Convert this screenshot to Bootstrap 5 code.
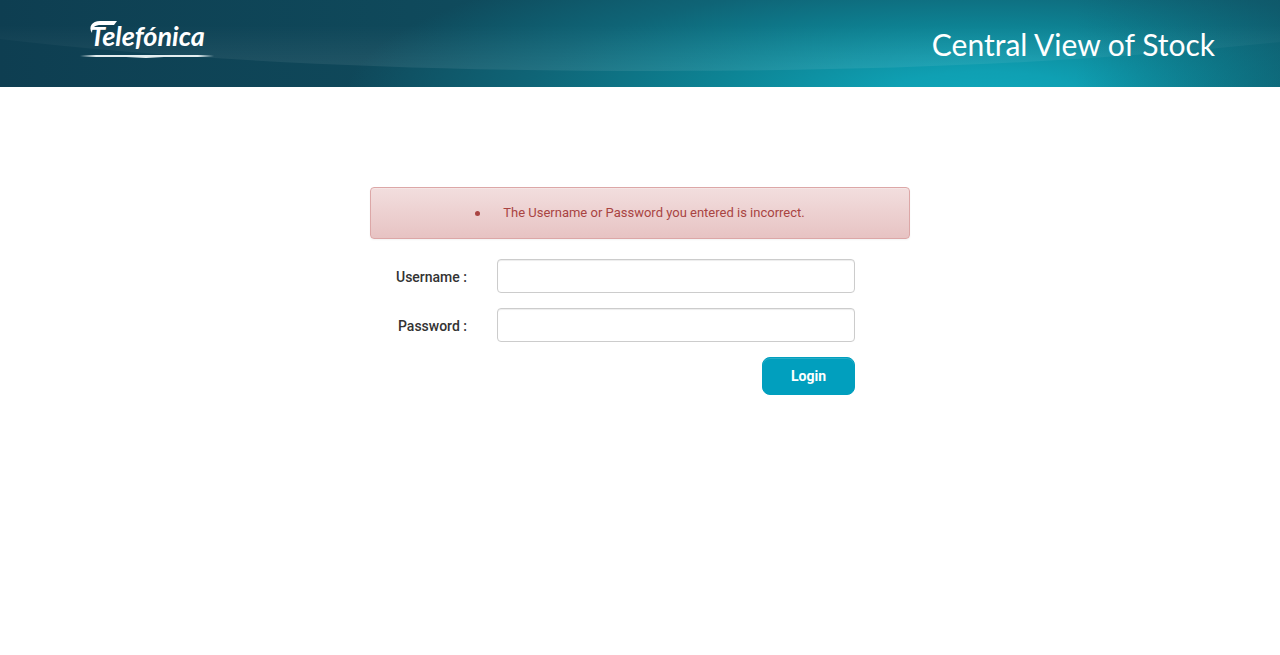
<!DOCTYPE html>
<html lang="en">
<head>
<meta charset="utf-8">
<meta name="viewport" content="width=device-width, initial-scale=1">
<title>Central View of Stock</title>
<link href="https://cdn.jsdelivr.net/npm/bootstrap@5.3.0/dist/css/bootstrap.min.css" rel="stylesheet">
<style>
body { font-family: Roboto, "Noto Sans", sans-serif; font-size: 14px; line-height: 20px; color: #333; }
.site-header { height: 87px; padding: 0 65px 0 80px; overflow: hidden;
  background: radial-gradient(ellipse 640px 160px at 77% 110%, #0fa6b9 0%, #0fa0b3 15%, #0d8495 42%, #0f6476 72%, rgba(15,82,99,0) 100%), linear-gradient(90deg, #0e3e51, #0f495b 32%, #0f5364 60%, #0f5464); }
.site-header::before { content: ""; position: absolute; inset: 0; background: linear-gradient(90deg, transparent 84%, rgba(15,75,92,.4)); }
.header-wave { inset: 0; }
.brand-logo { width: 134px; height: 45px; margin-top: -10px; }
.brand-logo text { font: italic 700 27px Lato, sans-serif; }
.app-title { font-family: Lato, sans-serif; font-size: 30px; font-weight: 400; line-height: 36px; }
.login-panel { max-width: 540px; margin-top: 100px; }
.alert-login { height: 52px; margin-bottom: 20px; border: 1px solid #dca7a7; border-radius: 4px; color: #a94442; font-size: 13px;
  background: linear-gradient(#f2dede, #e7c3c3); box-shadow: inset 0 1px 0 rgba(255,255,255,.25), 0 1px 2px rgba(0,0,0,.05); }
.alert-login ul { list-style: none; }
.alert-login li::before { content: ""; width: 5px; height: 5px; margin-right: 23px; border-radius: 50%; background: currentColor; }
.login-form { gap: 15px; padding-right: 55px; }
.field-row { gap: 30px; }
.field-label { width: 97px; padding-top: 2px; font-weight: 500; color: #333; }
.field-input { height: 34px; padding: 6px 12px; border: 1px solid #ccc; border-radius: 4px; font-size: 14px; box-shadow: inset 0 1px 1px rgba(0,0,0,.075); }
.btn-login { width: 93px; height: 38px; border: 1px solid #019fbe; border-radius: 8px; background: #019fbe; color: #fff; font-size: 14px; font-weight: 700; box-shadow: inset 0 1px 0 rgba(255,255,255,.15); }
.btn-login:hover { background: #018ba7; color: #fff; }
</style>
</head>
<body>
<header class="site-header position-relative d-flex align-items-center justify-content-between text-white">
  <svg class="header-wave position-absolute w-100 h-100" viewBox="0 0 1280 87" preserveAspectRatio="none" aria-hidden="true">
    <defs><linearGradient id="sheen" gradientUnits="userSpaceOnUse" x1="0" y1="25" x2="0" y2="71"><stop offset="0" stop-color="#fff" stop-opacity="0"/><stop offset="1" stop-color="#fff" stop-opacity=".08"/></linearGradient></defs>
    <path d="M0 0V39C200 62 420 71 660 71C900 71 1100 61 1280 42V0Z" fill="url(#sheen)"/>
  </svg>
  <svg class="brand-logo position-relative" viewBox="0 0 134 45" role="img" aria-label="Telefónica">
    <text x="10" y="30" fill="#fff">Telefónica</text>
    <path d="M12 17C8 11 12 5 20 5H37L34 9H21C15 9 12 11 12 17Z" fill="#fff"/>
    <path d="M0 40L16 39H118L134 40L118 41H84L66 42L46 41H16Z" fill="#e4eef0"/>
  </svg>
  <h1 class="app-title position-relative m-0">Central View of Stock</h1>
</header>
<main class="login-panel mx-auto">
  <div class="alert-login d-flex align-items-center justify-content-center" role="alert">
    <ul class="m-0 p-0"><li class="d-flex align-items-center">The Username or Password you entered is incorrect.</li></ul>
  </div>
  <form class="login-form d-flex flex-column">
    <div class="field-row d-flex align-items-center">
      <label class="field-label flex-shrink-0 text-end" for="username">Username :</label>
      <input class="field-input form-control" type="text" id="username">
    </div>
    <div class="field-row d-flex align-items-center">
      <label class="field-label flex-shrink-0 text-end" for="password">Password :</label>
      <input class="field-input form-control" type="password" id="password">
    </div>
    <button class="btn btn-login align-self-end" type="submit">Login</button>
  </form>
</main>
<script src="https://cdn.jsdelivr.net/npm/bootstrap@5.3.0/dist/js/bootstrap.bundle.min.js"></script>
</body>
</html>
